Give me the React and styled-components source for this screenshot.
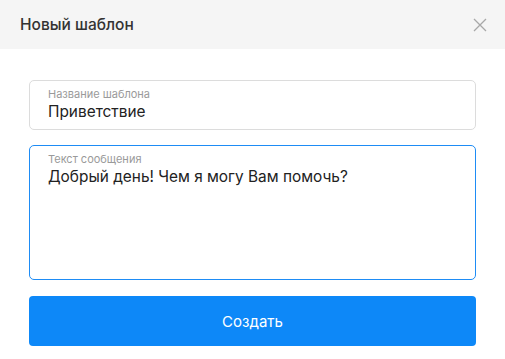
import { createGlobalStyle, styled } from "styled-components";

const GlobalStyle = createGlobalStyle`
  body {
    margin: 0;
    background: #ffffff;
    font-family: Inter, Roboto, "Noto Sans", sans-serif;
  }
`;

const Modal = styled.div`
  width: 505px;
  height: 359px;
  background: #ffffff;
  display: flex;
  flex-direction: column;
`;

const Header = styled.div`
  height: 49px;
  background: #f5f5f5;
  display: flex;
  align-items: center;
  justify-content: space-between;
  padding: 0 18px 0 20px;
  box-sizing: border-box;
`;

const Title = styled.h2`
  margin: 0;
  font-size: 15.5px;
  font-weight: 500;
  color: #333333;
`;

const CloseButton = styled.button`
  border: none;
  background: none;
  padding: 0;
  width: 14px;
  height: 14px;
  display: flex;
  cursor: pointer;
`;

const Body = styled.div`
  display: flex;
  flex-direction: column;
  gap: 16px;
  padding: 31px 29px 0 29px;
`;

const Field = styled.div`
  display: flex;
  flex-direction: column;
  box-sizing: border-box;
  height: ${(p) => p.$height}px;
  border: 1px solid #dcdcdc;
  border-radius: 5px;
  padding: 7px 18px 0 18px;
`;

const ActiveField = styled(Field)`
  margin-top: -1px;
  border-color: rgb(30, 140, 245);
`;

const Label = styled.span`
  font-size: 11px;
  line-height: 13px;
  color: #9a9a9a;
`;

const Value = styled.span`
  font-size: 15.4px;
  line-height: 22px;
  color: #222222;
`;

const SubmitButton = styled.button`
  height: 50px;
  border: none;
  border-radius: 4px;
  background: #0d88f8;
  color: #ffffff;
  font-family: inherit;
  font-size: 15px;
  cursor: pointer;
`;

const App = () => {
  return (
    <>
      <GlobalStyle />
      <Modal>
        <Header>
          <Title>Новый шаблон</Title>
          <CloseButton aria-label="Закрыть">
            <svg width="14" height="14" viewBox="0 0 14 14">
              <path d="M1 1L13 13M13 1L1 13" stroke="#a8a8a8" strokeWidth="1.3" />
            </svg>
          </CloseButton>
        </Header>
        <Body>
          <Field $height={50}>
            <Label>Название шаблона</Label>
            <Value>Приветствие</Value>
          </Field>
          <ActiveField $height={135}>
            <Label>Текст сообщения</Label>
            <Value>Добрый день! Чем я могу Вам помочь?</Value>
          </ActiveField>
          <SubmitButton>Создать</SubmitButton>
        </Body>
      </Modal>
    </>
  );
};

export default App;
